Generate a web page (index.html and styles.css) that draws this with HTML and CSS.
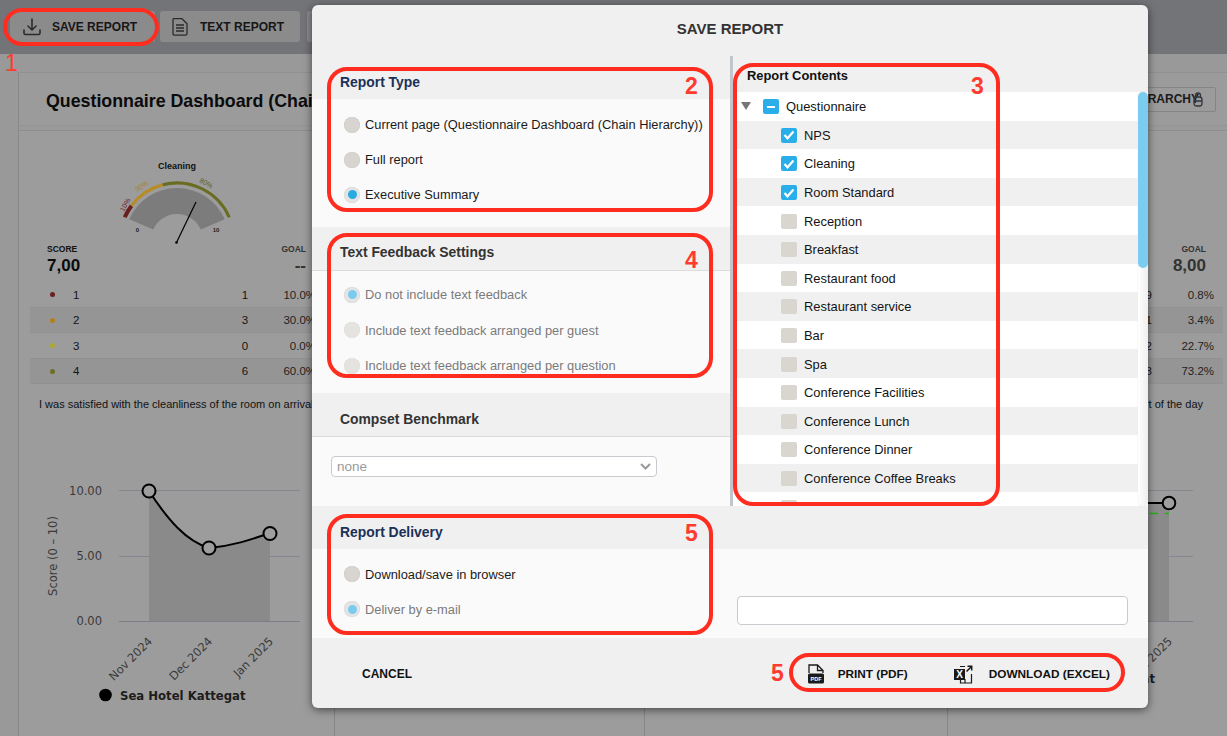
FILE: index.html
```html
<!DOCTYPE html>
<html lang="en">
<head>
<meta charset="utf-8">
<title>Save report</title>
<link rel="stylesheet" href="styles.css">
</head>
<body>
<header class="toolbar">
  <button class="tool-btn tool-save">
    <svg class="tool-icon" width="18" height="18" viewBox="0 0 18 18" fill="none" stroke="#2b2b2b" stroke-width="1.6" stroke-linecap="round" stroke-linejoin="round"><path d="M9 1v10.500M5 8l4 4 4-4"/><path d="M1 12v3a1.500 1.500 0 0 0 1.500 1.500h13a1.500 1.500 0 0 0 1.500-1.500v-3"/></svg>
    SAVE REPORT
  </button>
  <button class="tool-btn tool-text">
    <svg class="tool-icon" width="16" height="18" viewBox="0 0 16 18" fill="none" stroke="#2b2b2b" stroke-width="1.300" stroke-linejoin="round"><path d="M2.500 .7h7.500l5 5v10a1.500 1.500 0 0 1-1.500 1.500h-11a1.500 1.500 0 0 1-1.500-1.500v-14a1.500 1.500 0 0 1 1.500-1.500z"/><path d="M4 7h8M4 10h8M4 13h8" stroke-width="1.500"/></svg>
    TEXT REPORT
  </button>
  <button class="tool-btn tool-other">OTHER</button>
</header>

<main class="page">
  <section class="card">
    <div class="card-head">
      <h1 class="card-title">Questionnaire Dashboard (Chain Hierarchy)</h1>
      <button class="hier-btn">CHAIN HIERARCHY<svg class="hier-icon" width="10" height="15" viewBox="0 0 10 15" fill="none" stroke="#33363d" stroke-width="1.300"><rect x="1" y="5" width="8" height="9" rx="2.500"/><path d="M2.500 5V3.500a2.500 2.500 0 0 1 5 0V5M1 9h8"/></svg></button>
    </div>
    <div class="panels">
      <div class="panel panel-a">
        <svg class="gauge" viewBox="77 155 200 90" width="200" height="90">
          <text class="g-title" x="177" y="170" text-anchor="middle">Cleaning</text>
          <path d="M129.300 220.300A52 52 0 0 1 224.700 220.300L200.800 230.600A26 26 0 0 0 153.200 230.600Z" fill="#7c7c7c"/>
          <path d="M124.700 218.300A57 57 0 0 1 131.500 206.700" fill="none" stroke="#6b1f1f" stroke-width="4"/>
          <path d="M131.500 206.700A57 57 0 0 1 162.700 185.800" fill="none" stroke="#b88c22" stroke-width="3"/>
          <path d="M162.700 185.800A57 57 0 0 1 229.300 218.300" fill="none" stroke="#6a6c22" stroke-width="3"/>
          <text class="g-pct g-red" transform="translate(124 213) rotate(-62)">10%</text>
          <text class="g-pct g-gold" transform="translate(137 193) rotate(-33)">30%</text>
          <text class="g-pct g-olive" transform="translate(199 183) rotate(28)">80%</text>
          <text class="g-end" x="137.500" y="233" text-anchor="middle">0</text>
          <text class="g-end" x="216" y="233" text-anchor="middle">10</text>
          <path d="M176.500 243.500L196 203" stroke="#000" stroke-width="1.200"/>
          <circle cx="176.500" cy="243.500" r="1.300" fill="#000"/>
        </svg>
        <div class="score">
          <div><div class="score-label">SCORE</div><div class="score-value">7,00</div></div>
          <div class="score-goal"><div class="score-label label-dim">GOAL</div><div class="score-value value-dim">--</div></div>
        </div>
        <div class="q-row"><span class="dot dot-1"></span><span>1</span><span class="q-count">1</span><span class="q-pct">10.0%</span></div>
        <div class="q-row q-band q-tall"><span class="dot dot-2"></span><span>2</span><span class="q-count">3</span><span class="q-pct">30.0%</span></div>
        <div class="q-row"><span class="dot dot-3"></span><span>3</span><span class="q-count">0</span><span class="q-pct">0.0%</span></div>
        <div class="q-row q-band q-tall"><span class="dot dot-4"></span><span>4</span><span class="q-count">6</span><span class="q-pct">60.0%</span></div>
        <p class="statement">I was satisfied with the cleanliness of the room on arrival</p>
        <svg class="chart" viewBox="30 470 305 260" width="305" height="260">
          <path class="grid" d="M119 490.500H300M119 556.500H300"/>
          <path class="area" d="M149 491C168 520 186 541 209 548C232 546 250 540 270 533V621H149Z"/>
          <path class="axis" d="M119 621.500H300"/>
          <path class="line" d="M149 491C168 520 186 541 209 548C232 546 250 540 270 533"/>
          <circle class="pt" cx="149" cy="491" r="6.500"/>
          <circle class="pt" cx="209" cy="548" r="6.500"/>
          <circle class="pt" cx="270" cy="533.500" r="6.500"/>
          <text class="tick" x="102" y="495" text-anchor="end">10.00</text>
          <text class="tick" x="102" y="560" text-anchor="end">5.00</text>
          <text class="tick" x="102" y="625" text-anchor="end">0.00</text>
          <text class="tick" transform="translate(57 556) rotate(-90)" text-anchor="middle">Score (0 – 10)</text>
          <text class="tick" transform="translate(153 642) rotate(-45)" text-anchor="end">Nov 2024</text>
          <text class="tick" transform="translate(213 642) rotate(-45)" text-anchor="end">Dec 2024</text>
          <text class="tick" transform="translate(274 642) rotate(-45)" text-anchor="end">Jan 2025</text>
          <circle cx="105.500" cy="695" r="6.300" fill="#000"/>
          <text class="legend" x="120" y="700">Sea Hotel Kattegat</text>
        </svg>
      </div>
      <div class="panel"></div>
      <div class="panel"></div>
      <div class="panel panel-d">
        <div class="gauge-slot"></div>
        <div class="score">
          <div><div class="score-label">SCORE</div><div class="score-value">7,90</div></div>
          <div class="score-goal"><div class="score-label label-dim">GOAL</div><div class="score-value value-dim">8,00</div></div>
        </div>
        <div class="q-row"><span class="dot dot-1"></span><span>1</span><span class="q-count">9</span><span class="q-pct">0.8%</span></div>
        <div class="q-row q-band q-tall"><span class="dot dot-2"></span><span>2</span><span class="q-count">41</span><span class="q-pct">3.4%</span></div>
        <div class="q-row"><span class="dot dot-3"></span><span>3</span><span class="q-count">272</span><span class="q-pct">22.7%</span></div>
        <div class="q-row q-band q-tall"><span class="dot dot-4"></span><span>4</span><span class="q-count">878</span><span class="q-pct">73.2%</span></div>
        <p class="statement statement-end">Breakfast gave me a good start of the day</p>
        <svg class="chart" viewBox="959 470 268 260" width="268" height="260">
          <path class="grid" d="M1000 490.500H1193M1000 556.500H1193"/>
          <path class="area" d="M1000 503H1169V621H1000Z"/>
          <path class="axis" d="M1000 621.500H1193"/>
          <path class="line" d="M1000 503H1169"/>
          <path class="goal-line" d="M1000 513.500H1169"/>
          <circle class="pt" cx="1169" cy="503" r="6.300"/>
          <text class="tick" transform="translate(1173 642) rotate(-45)" text-anchor="end">Jan 2025</text>
          <text class="legend" x="1155" y="683" text-anchor="end">Sea Hotel Kattegat</text>
        </svg>
      </div>
    </div>
  </section>
</main>

<div class="modal">
  <h2 class="modal-title">SAVE REPORT</h2>
  <div class="modal-body">
    <div class="col-left">
      <section>
        <h3 class="sec-head sec-navy">Report Type</h3>
        <div class="sec-body body-type">
          <label class="radio-row"><span class="radio"></span>Current page (Questionnaire Dashboard (Chain Hierarchy))</label>
          <label class="radio-row"><span class="radio"></span>Full report</label>
          <label class="radio-row"><span class="radio radio-on"></span>Executive Summary</label>
        </div>
      </section>
      <section>
        <h3 class="sec-head sec-dark sec-line">Text Feedback Settings</h3>
        <div class="sec-body body-text is-off">
          <label class="radio-row"><span class="radio radio-on"></span>Do not include text feedback</label>
          <label class="radio-row"><span class="radio"></span>Include text feedback arranged per guest</label>
          <label class="radio-row"><span class="radio"></span>Include text feedback arranged per question</label>
        </div>
      </section>
      <section>
        <h3 class="sec-head sec-dark sec-line sec-comp">Compset Benchmark</h3>
        <div class="sec-body body-comp">
          <div class="select">none
            <svg width="11" height="7" viewBox="0 0 11 7" fill="none" stroke="#9a9a9a" stroke-width="2"><path d="M1 1l4.500 4.500L10 1"/></svg>
          </div>
        </div>
      </section>
    </div>
    <div class="col-right">
      <h3 class="tree-head">Report Contents</h3>
      <div class="tree-wrap">
        <ul class="tree">
          <li class="tree-row"><span class="caret"></span><span class="check check-mixed"></span>Questionnaire</li>
          <li class="tree-row leaf band"><span class="check check-on"><svg width="12" height="10" viewBox="0 0 12 10" fill="none" stroke="#fff" stroke-width="2.200"><path d="M1.500 5l3 3.300L10.500 1.500"/></svg></span>NPS</li>
          <li class="tree-row leaf"><span class="check check-on"><svg width="12" height="10" viewBox="0 0 12 10" fill="none" stroke="#fff" stroke-width="2.200"><path d="M1.500 5l3 3.300L10.500 1.500"/></svg></span>Cleaning</li>
          <li class="tree-row leaf band"><span class="check check-on"><svg width="12" height="10" viewBox="0 0 12 10" fill="none" stroke="#fff" stroke-width="2.200"><path d="M1.500 5l3 3.300L10.500 1.500"/></svg></span>Room Standard</li>
          <li class="tree-row leaf"><span class="check"></span>Reception</li>
          <li class="tree-row leaf band"><span class="check"></span>Breakfast</li>
          <li class="tree-row leaf"><span class="check"></span>Restaurant food</li>
          <li class="tree-row leaf band"><span class="check"></span>Restaurant service</li>
          <li class="tree-row leaf"><span class="check"></span>Bar</li>
          <li class="tree-row leaf band"><span class="check"></span>Spa</li>
          <li class="tree-row leaf"><span class="check"></span>Conference Facilities</li>
          <li class="tree-row leaf band"><span class="check"></span>Conference Lunch</li>
          <li class="tree-row leaf"><span class="check"></span>Conference Dinner</li>
          <li class="tree-row leaf band"><span class="check"></span>Conference Coffee Breaks</li>
          <li class="tree-row leaf"><span class="check"></span></li>
        </ul>
        <div class="scroll-track"><div class="scroll-thumb"></div></div>
      </div>
    </div>
  </div>
  <section class="delivery">
    <h3 class="sec-head sec-navy">Report Delivery</h3>
    <div class="delivery-body">
      <div class="delivery-opts">
        <label class="radio-row"><span class="radio"></span>Download/save in browser</label>
        <label class="radio-row is-off"><span class="radio radio-on"></span>Deliver by e-mail</label>
      </div>
      <input class="email" type="text" aria-label="E-mail">
    </div>
  </section>
  <footer class="modal-foot">
    <button class="foot-btn foot-cancel">CANCEL</button>
    <div class="foot-actions">
      <button class="foot-btn">
        <svg width="16" height="20" viewBox="0 0 16 20"><path d="M1 9V1h8.500L15 6.500V9" fill="none" stroke="#1a1a1a" stroke-width="1.300"/><path d="M9.500 1v5.500H15" fill="none" stroke="#1a1a1a" stroke-width="1.300"/><rect y="9.500" width="16" height="10" rx="1.500" fill="#1a1a1a"/><text class="icon-mini" x="8" y="16.500" text-anchor="middle">PDF</text></svg>
        PRINT (PDF)
      </button>
      <button class="foot-btn">
        <svg width="19" height="19" viewBox="0 0 19 19"><path d="M6 1.500h5M11 14v4H6.500v-3M17.500 9v9H11" fill="none" stroke="#1a1a1a" stroke-width="1.200"/><path d="M12.500 6.500L17.500 1.500M13.500 1.300h4.200v4.200" fill="none" stroke="#1a1a1a" stroke-width="1.500"/><rect y="4" width="11" height="11" fill="#1a1a1a"/><text class="icon-x" x="5.500" y="13" text-anchor="middle">X</text></svg>
        DOWNLOAD (EXCEL)
      </button>
    </div>
  </footer>
</div>

<div class="mark mark-save"></div>
<div class="mark mark-type"></div>
<div class="mark mark-contents"></div>
<div class="mark mark-feedback"></div>
<div class="mark mark-delivery"></div>
<div class="mark mark-actions"></div>
<span class="num num-1">1</span>
<span class="num num-2">2</span>
<span class="num num-3">3</span>
<span class="num num-4">4</span>
<span class="num num-5a">5</span>
<span class="num num-5b">5</span>
</body>
</html>
```

FILE: styles.css
```css
* { box-sizing: border-box; }
html, body { margin: 0; height: 736px; overflow: hidden; }
body {
  position: relative;
  background: #999;
  color: #000;
  font-family: "Liberation Sans", Arial, sans-serif;
}
button { font-family: inherit; border: 0; background: none; padding: 0; }
h1, h2, h3, p, ul { margin: 0; padding: 0; }
ul { list-style: none; }

/* Background page */
.toolbar {
  display: flex;
  gap: 5px;
  height: 54px;
  padding: 11px 0 0 10px;
  background: #737478;
}
.tool-btn {
  display: flex;
  align-items: center;
  height: 31px;
  background: #8b8b8b;
  border-radius: 3px;
  font-size: 12px;
  font-weight: 700;
  color: #161616;
}
.tool-save { width: 145px; padding-left: 13px; }
.tool-save .tool-icon { margin-right: 11px; }
.tool-text { width: 140px; padding-left: 12px; margin-left: 0; }
.tool-text .tool-icon { margin-right: 12px; }
.tool-other { width: 140px; padding-left: 12px; margin-left: 2px; }

.page { padding: 18px 0 0 18px; }
.card { border-left: 1px solid #888; border-top: 1px solid #909090; background: #9a9a9a; }
.card-head {
  display: flex;
  justify-content: space-between;
  align-items: center;
  height: 53px;
  padding: 4px 11px 0 27px;
  background: #9b9b9b;
  border-bottom: 1px solid #949494;
}
.card-title { font-size: 17.800px; font-weight: 700; color: #0b0b0b; white-space: nowrap; }
.hier-btn {
  display: flex;
  align-items: center;
  height: 25px;
  margin-top: -4px;
  padding: 0 13px 0 12px;
  border: 1px solid #858585;
  border-radius: 2px;
  font-size: 12px;
  font-weight: 700;
  color: #1a1a1a;
}
.hier-icon { margin-left: -6px; margin-right: -1px; }

.panels {
  display: grid;
  grid-template-columns: 316px 310px 303px 279px;
  margin-top: 4px;
  height: 610px;
  border-top: 1px solid #8e8e8e;
  background: #9c9c9c;
}
.panel { border-right: 1px solid #868686; padding-left: 11px; }
.panel-d { border-right: 0; padding-right: 4px; }

.gauge { display: block; margin: 23px 0 0 47px; overflow: visible; }
.gauge-slot { height: 90px; margin-top: 23px; }
.g-title { font-size: 9px; font-weight: 700; fill: #111; }
.g-pct { font-size: 7px; }
.g-red { fill: #6b1f1f; }
.g-gold { fill: #a5801f; }
.g-olive { fill: #5f6320; }
.g-end { font-size: 6px; font-weight: 700; fill: #222; }

.score {
  display: flex;
  justify-content: space-between;
  height: 38px;
  padding: 0 28px 0 17px;
}
.panel-d .score { padding-right: 17px; }
.score-goal { text-align: right; }
.score-label { font-size: 8.500px; font-weight: 700; line-height: 10px; color: #111; margin-top: 0; }
.label-dim { color: #333; }
.score-value { font-size: 17px; font-weight: 700; line-height: 24px; color: #0b0b0b; }
.value-dim { color: #333; }

.q-row {
  display: grid;
  grid-template-columns: 43px 1fr 40px 51px;
  align-items: center;
  height: 25px;
  padding: 0 18px 0 0;
  font-size: 11.500px;
  color: #141414;
}
.q-tall { height: 26px; }
.panel-d .q-row { grid-template-columns: 43px 1fr 40px 62px; padding-right: 9px; }
.q-band { background: #959595; border-top: 1px solid #919191; border-bottom: 1px solid #919191; }
.dot { justify-self: start; width: 5px; height: 5px; border-radius: 50%; margin-left: 20px; }
.dot-1 { background: #6b1f1f; }
.dot-2 { background: #b4801f; }
.dot-3 { background: #b0a836; }
.dot-4 { background: #6c6f24; }
.q-count { text-align: center; }
.panel-d .q-count { text-align: right; }
.q-pct { text-align: right; color: #222; }

.statement { margin: 13px 0 0 9px; height: 14px; font-size: 11px; line-height: 14px; color: #111; white-space: nowrap; }
.statement-end { margin: 13px 20px 0 0; text-align: right; }
.chart { display: block; margin-top: 59px; overflow: hidden; }
.grid { stroke: #868690; stroke-width: 1; fill: none; }
.axis { stroke: #7e7e8a; stroke-width: 1.200; fill: none; }
.area { fill: #8a8a8a; }
.line { stroke: #000; stroke-width: 2; fill: none; }
.goal-line { stroke: #22b014; stroke-width: 1.500; stroke-dasharray: 8 7; fill: none; }
.pt { fill: #9e9e9e; stroke: #000; stroke-width: 2; }
.tick { font-family: "DejaVu Sans", sans-serif; font-size: 11.500px; fill: #3a3a3a; }
.legend { font-family: "DejaVu Sans", sans-serif; font-size: 11.700px; font-weight: 700; fill: #1c1c1c; }

/* Modal */
.modal {
  position: absolute;
  left: 312px;
  top: 5px;
  width: 836px;
  height: 703px;
  display: flex;
  flex-direction: column;
  background: #f0f0f0;
  border-radius: 6px;
  box-shadow: 0 2px 9px rgba(0, 0, 0, .55);
  overflow: hidden;
  color: #141414;
}
.modal-title {
  height: 51px;
  padding-top: 15px;
  text-align: center;
  font-size: 15px;
  line-height: 17px;
  font-weight: 700;
  color: #333;
}
.modal-body { display: flex; height: 450px; }
.col-left { width: 421px; border-right: 3px solid #c2c5cc; }
.col-right { flex: 1; min-width: 0; display: flex; flex-direction: column; }

.sec-head {
  height: 43px;
  padding: 18px 0 0 28px;
  font-size: 13.900px;
  line-height: 16px;
  font-weight: 700;
}
.sec-navy { color: #1c3058; }
.sec-dark { color: #333; }
.sec-line { height: 44px; padding-top: 17px; border-bottom: 1px solid #dcdcdc; }
.sec-comp { padding-top: 18px; }
.sec-body { background: #fafafa; }
.body-type { height: 128px; padding-top: 8px; }
.body-text { height: 122px; padding-top: 6px; }
.body-text .radio-row { height: 35.500px; }
.body-comp { height: 69px; padding: 19px 0 0 19px; }

.radio-row {
  display: flex;
  align-items: center;
  gap: 5px;
  height: 35px;
  padding-left: 32px;
  font-size: 12.850px;
  color: #1a1a1a;
  white-space: nowrap;
}
.radio {
  flex: none;
  display: grid;
  place-items: center;
  width: 16px;
  height: 16px;
  margin-right: 0;
  border-radius: 50%;
  background: #d8d5d0;
  box-shadow: inset 0 0 1px rgba(0, 0, 0, .2);
}
.radio-on { background: #e4e4e4; }
.radio-on::after {
  content: "";
  width: 9px;
  height: 9px;
  border-radius: 50%;
  background: #29abe2;
}
.is-off .radio { opacity: .6; }
.is-off .radio-on { opacity: 1; }
.is-off .radio-on::after { background: #7ccbee; }
.is-off, .is-off .radio-row { color: #7a7a7a; }

.select {
  display: flex;
  justify-content: space-between;
  align-items: center;
  width: 326px;
  height: 21px;
  padding: 0 5px;
  border: 1px solid #c9c9cf;
  border-radius: 4px;
  background: #fff;
  font-size: 13.500px;
  color: #9a9a9a;
}

.tree-head {
  height: 36px;
  padding: 12px 0 0 14px;
  font-size: 12.900px;
  line-height: 15px;
  font-weight: 700;
  color: #111;
}
.tree-wrap { display: flex; height: 414px; background: #fff; }
.tree { flex: 1; overflow: hidden; }
.tree-row {
  display: flex;
  align-items: center;
  height: 28.600px;
  padding: 1px 0 0 30px;
  font-size: 12.900px;
  color: #141414;
  position: relative;
}
.leaf { padding-left: 48px; }
.band { background: #f0f0f0; }
.caret {
  position: absolute;
  left: 8px;
  top: 10px;
  border-left: 5.500px solid transparent;
  border-right: 5.500px solid transparent;
  border-top: 8px solid #777;
}
.check {
  flex: none;
  display: grid;
  place-items: center;
  width: 16px;
  height: 15px;
  margin-right: 7px;
  border-radius: 2px;
  background: #d9d5cf;
}
.check-on, .check-mixed { background: #2aaeea; }
.check-mixed::after { content: ""; width: 8px; height: 2px; background: #fff; }
.scroll-track {
  flex: none;
  width: 10px;
  border-radius: 5px;
  background: linear-gradient(to right, #fff, #eee);
  box-shadow: 0 0 1px rgba(0, 0, 0, .3);
}
.scroll-thumb { height: 176px; border-radius: 5px; background: #7ccbf0; }

.delivery-body { display: flex; height: 89px; background: #fafafa; }
.delivery-opts { width: 425px; padding-top: 7.800px; }
.email {
  width: 391px;
  height: 29px;
  margin-top: 47px;
  border: 1px solid #c9c9cf;
  border-radius: 4px;
  background: #fff;
}

.modal-foot { flex: 1; display: flex; justify-content: space-between; align-items: center; padding: 2px 38px 0 50px; }
.foot-actions { display: flex; gap: 46px; }
.foot-btn {
  display: flex;
  align-items: center;
  gap: 14px;
  font-size: 11.800px;
  font-weight: 700;
  color: #111;
}
.foot-cancel { font-size: 12px; }
.foot-actions .foot-btn:last-child { gap: 16px; }
.icon-mini { font-size: 5.500px; font-weight: 700; fill: #fff; font-family: "Liberation Sans", sans-serif; }
.icon-x { font-size: 10px; font-weight: 700; fill: #fff; font-family: "Liberation Sans", sans-serif; }

/* Red annotations */
.mark { position: absolute; border: 4px solid #ff2d1f; pointer-events: none; }
.mark-save { left: 3px; top: 8px; width: 156px; height: 38px; border-radius: 19px; }
.mark-type { left: 327px; top: 67px; width: 386px; height: 145px; border-radius: 20px; }
.mark-feedback { left: 327px; top: 233px; width: 386px; height: 145px; border-radius: 20px; }
.mark-contents { left: 733px; top: 63px; width: 267px; height: 443px; border-radius: 20px; }
.mark-delivery { left: 327px; top: 514px; width: 386px; height: 121px; border-radius: 20px; }
.mark-actions { left: 789px; top: 653px; width: 336px; height: 39px; border-radius: 20px; }
.num { position: absolute; font-size: 23px; line-height: 26px; font-weight: 700; color: #ff3b30; }
.num-1 { left: 5px; top: 50px; font-weight: 400; }
.num-2 { left: 685px; top: 73px; }
.num-3 { left: 971px; top: 73px; }
.num-4 { left: 685px; top: 247px; }
.num-5a { left: 685px; top: 520px; }
.num-5b { left: 771px; top: 660px; }
```
